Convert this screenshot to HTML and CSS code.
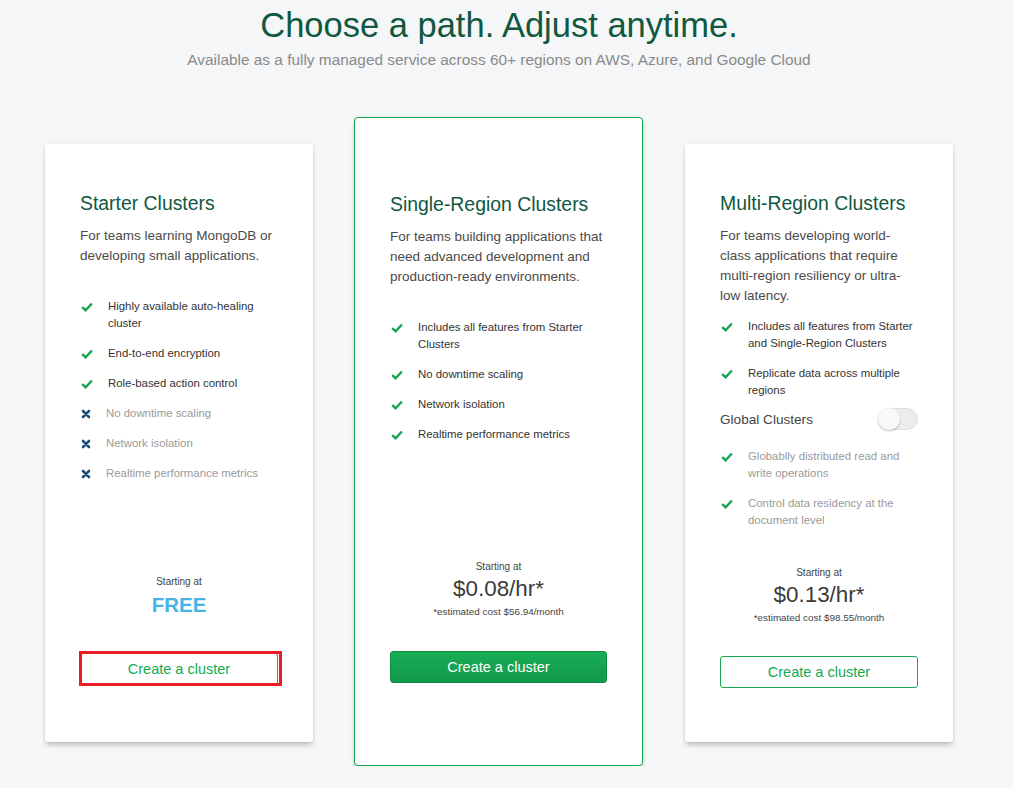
FILE: index.html
```html
<!DOCTYPE html>
<html lang="en">
<head>
<meta charset="utf-8">
<title>Choose a path</title>
<link rel="stylesheet" href="styles.css">
</head>
<body>
<div class="page">
  <header class="hero">
    <h1 class="hero-title">Choose a path. Adjust anytime.</h1>
    <p class="hero-sub">Available as a fully managed service across 60+ regions on AWS, Azure, and Google Cloud</p>
  </header>

  <div class="plans">
    <section class="plan plan-side plan-starter">
      <h2 class="plan-title">Starter Clusters</h2>
      <p class="plan-desc">For teams learning MongoDB or developing small applications.</p>
      <ul class="features">
        <li class="feature"><span class="ficon check"><svg width="12" height="10" viewBox="0 0 12 10"><path d="M1.2 5.1 L4.6 8.2 L10.9 1.5" fill="none" stroke="currentColor" stroke-width="2.4"/></svg></span><span class="ftext">Highly available auto-healing cluster</span></li>
        <li class="feature"><span class="ficon check"><svg width="12" height="10" viewBox="0 0 12 10"><path d="M1.2 5.1 L4.6 8.2 L10.9 1.5" fill="none" stroke="currentColor" stroke-width="2.4"/></svg></span><span class="ftext">End-to-end encryption</span></li>
        <li class="feature"><span class="ficon check"><svg width="12" height="10" viewBox="0 0 12 10"><path d="M1.2 5.1 L4.6 8.2 L10.9 1.5" fill="none" stroke="currentColor" stroke-width="2.4"/></svg></span><span class="ftext">Role-based action control</span></li>
        <li class="feature feature-off"><span class="ficon cross"><svg width="10" height="10" viewBox="0 0 10 10"><path d="M2 2 L8 8 M8 2 L2 8" fill="none" stroke="currentColor" stroke-width="2.6" stroke-linecap="round"/></svg></span><span class="ftext">No downtime scaling</span></li>
        <li class="feature feature-off"><span class="ficon cross"><svg width="10" height="10" viewBox="0 0 10 10"><path d="M2 2 L8 8 M8 2 L2 8" fill="none" stroke="currentColor" stroke-width="2.6" stroke-linecap="round"/></svg></span><span class="ftext">Network isolation</span></li>
        <li class="feature feature-off"><span class="ficon cross"><svg width="10" height="10" viewBox="0 0 10 10"><path d="M2 2 L8 8 M8 2 L2 8" fill="none" stroke="currentColor" stroke-width="2.6" stroke-linecap="round"/></svg></span><span class="ftext">Realtime performance metrics</span></li>
      </ul>
      <div class="pricing">
        <div class="starting">Starting at</div>
        <div class="price price-free">FREE</div>
      </div>
      <button class="btn btn-outline btn-flagged">Create a cluster</button>
    </section>

    <section class="plan plan-featured">
      <h2 class="plan-title">Single-Region Clusters</h2>
      <p class="plan-desc">For teams building applications that need advanced development and production-ready environments.</p>
      <ul class="features">
        <li class="feature"><span class="ficon check"><svg width="12" height="10" viewBox="0 0 12 10"><path d="M1.2 5.1 L4.6 8.2 L10.9 1.5" fill="none" stroke="currentColor" stroke-width="2.4"/></svg></span><span class="ftext">Includes all features from Starter Clusters</span></li>
        <li class="feature"><span class="ficon check"><svg width="12" height="10" viewBox="0 0 12 10"><path d="M1.2 5.1 L4.6 8.2 L10.9 1.5" fill="none" stroke="currentColor" stroke-width="2.4"/></svg></span><span class="ftext">No downtime scaling</span></li>
        <li class="feature"><span class="ficon check"><svg width="12" height="10" viewBox="0 0 12 10"><path d="M1.2 5.1 L4.6 8.2 L10.9 1.5" fill="none" stroke="currentColor" stroke-width="2.4"/></svg></span><span class="ftext">Network isolation</span></li>
        <li class="feature"><span class="ficon check"><svg width="12" height="10" viewBox="0 0 12 10"><path d="M1.2 5.1 L4.6 8.2 L10.9 1.5" fill="none" stroke="currentColor" stroke-width="2.4"/></svg></span><span class="ftext">Realtime performance metrics</span></li>
      </ul>
      <div class="pricing">
        <div class="starting">Starting at</div>
        <div class="price">$0.08/hr*</div>
        <div class="estimate">*estimated cost $56.94/month</div>
      </div>
      <button class="btn btn-filled">Create a cluster</button>
    </section>

    <section class="plan plan-side plan-multi">
      <h2 class="plan-title">Multi-Region Clusters</h2>
      <p class="plan-desc plan-desc-tight">For teams developing world-class applications that require multi-region resiliency or ultra-low latency.</p>
      <ul class="features">
        <li class="feature"><span class="ficon check"><svg width="12" height="10" viewBox="0 0 12 10"><path d="M1.2 5.1 L4.6 8.2 L10.9 1.5" fill="none" stroke="currentColor" stroke-width="2.4"/></svg></span><span class="ftext">Includes all features from Starter and Single-Region Clusters</span></li>
        <li class="feature"><span class="ficon check"><svg width="12" height="10" viewBox="0 0 12 10"><path d="M1.2 5.1 L4.6 8.2 L10.9 1.5" fill="none" stroke="currentColor" stroke-width="2.4"/></svg></span><span class="ftext">Replicate data across multiple regions</span></li>
        <li class="global-row"><span class="global-label">Global Clusters</span><span class="toggle"><span class="toggle-knob"></span></span></li>
        <li class="feature feature-muted"><span class="ficon check"><svg width="12" height="10" viewBox="0 0 12 10"><path d="M1.2 5.1 L4.6 8.2 L10.9 1.5" fill="none" stroke="currentColor" stroke-width="2.4"/></svg></span><span class="ftext">Globablly distributed read and write operations</span></li>
        <li class="feature feature-muted"><span class="ficon check"><svg width="12" height="10" viewBox="0 0 12 10"><path d="M1.2 5.1 L4.6 8.2 L10.9 1.5" fill="none" stroke="currentColor" stroke-width="2.4"/></svg></span><span class="ftext">Control data residency at the document level</span></li>
      </ul>
      <div class="pricing">
        <div class="starting">Starting at</div>
        <div class="price">$0.13/hr*</div>
        <div class="estimate">*estimated cost $98.55/month</div>
      </div>
      <button class="btn btn-outline">Create a cluster</button>
    </section>
  </div>
</div>
</body>
</html>
```

FILE: styles.css
```css
* { box-sizing: border-box; }

html, body {
  margin: 0;
  padding: 0;
  background: #f5f6f7;
  font-family: "Liberation Sans", Arial, Helvetica, sans-serif;
  color: #333;
}

.page {
  width: 998px;
}

.hero {
  text-align: center;
}

.hero-title {
  margin: 5px 0 0;
  font-size: 34.5px;
  line-height: 40px;
  font-weight: 400;
  color: #10583f;
}

.hero-sub {
  margin: 5px 0 0;
  font-size: 15.4px;
  line-height: 20px;
  color: #8a8a8a;
}

.plans {
  display: flex;
  align-items: flex-start;
  gap: 41px;
  margin: 47px 0 0 45px;
}

.plan {
  display: flex;
  flex-direction: column;
  background: #fff;
  border-radius: 3px;
  padding: 47px 35px 57px;
  box-shadow: 0 0 2px rgba(0, 0, 0, 0.10), 0 4px 5px -1px rgba(0, 0, 0, 0.22);
}

.plan-side {
  width: 268px;
  height: 598px;
  margin-top: 27px;
}

.plan-multi {
  margin-left: 1px;
  padding-bottom: 54px;
}

.plan-multi .pricing {
  margin-bottom: 31px;
}

.plan-featured {
  width: 289px;
  height: 649px;
  border: 1px solid #13aa52;
  border-radius: 4px;
  padding: 74px 35px 82px;
}

.plan-title {
  margin: 0;
  font-size: 19.4px;
  line-height: 24px;
  font-weight: 400;
  color: #10583f;
}

.plan-desc {
  margin: 11px 0 0;
  font-size: 13.5px;
  line-height: 20px;
  color: #4a4a4a;
}

.features {
  list-style: none;
  margin: 32px 0 0;
  padding: 0;
}

.plan-desc-tight + .features {
  margin-top: 12px;
}

.feature {
  display: flex;
  align-items: flex-start;
  margin-bottom: 13px;
  font-size: 11.4px;
  line-height: 17px;
  color: #333;
}

.feature:last-child { margin-bottom: 0; }

.ficon {
  flex: 0 0 28px;
  height: 17px;
  display: flex;
  align-items: center;
  padding-left: 1px;
}

.check { color: #17a34f; }

.cross {
  flex-basis: 26px;
  color: #1f4e7a;
}

.feature-off .ftext,
.feature-muted .ftext {
  color: #9a9a9a;
}

.global-row {
  display: flex;
  align-items: center;
  justify-content: space-between;
  height: 22px;
  margin: -4px 0 18px;
}

.global-label {
  font-size: 13.6px;
  color: #444;
}

.toggle {
  position: relative;
  width: 40px;
  height: 22px;
  border-radius: 11px;
  background: #ececec;
  border: 1px solid #e0e0e0;
}

.toggle-knob {
  position: absolute;
  left: -1px;
  top: -1px;
  width: 22px;
  height: 22px;
  border-radius: 50%;
  background: #f8f8f8;
  box-shadow: 0 1px 2px rgba(0, 0, 0, 0.25);
}

.pricing {
  margin-top: auto;
  margin-bottom: 32px;
  text-align: center;
}

.starting {
  font-size: 10px;
  line-height: 14px;
  color: #444;
}

.price {
  font-size: 22.4px;
  line-height: 30px;
  color: #3b3b3b;
}

.price-free {
  font-size: 20.5px;
  line-height: 32px;
  font-weight: 700;
  color: #46b4e6;
}

.estimate {
  margin-top: 1px;
  font-size: 9.9px;
  line-height: 14px;
  color: #444;
}

.btn {
  display: block;
  width: 100%;
  height: 32px;
  border-radius: 3px;
  font-family: inherit;
  font-size: 14.5px;
  cursor: pointer;
}

.btn-outline {
  background: #fff;
  border: 1px solid #13aa52;
  color: #13aa52;
}

.btn-filled {
  background: linear-gradient(#18ad55, #129a4a);
  border: 1px solid #0f8c43;
  color: #fff;
}

.btn-flagged {
  position: relative;
}

.btn-flagged::after {
  content: "";
  position: absolute;
  left: -2px;
  right: -5px;
  top: -3px;
  bottom: -2px;
  border: 3px solid #ec1c24;
  pointer-events: none;
}
```
